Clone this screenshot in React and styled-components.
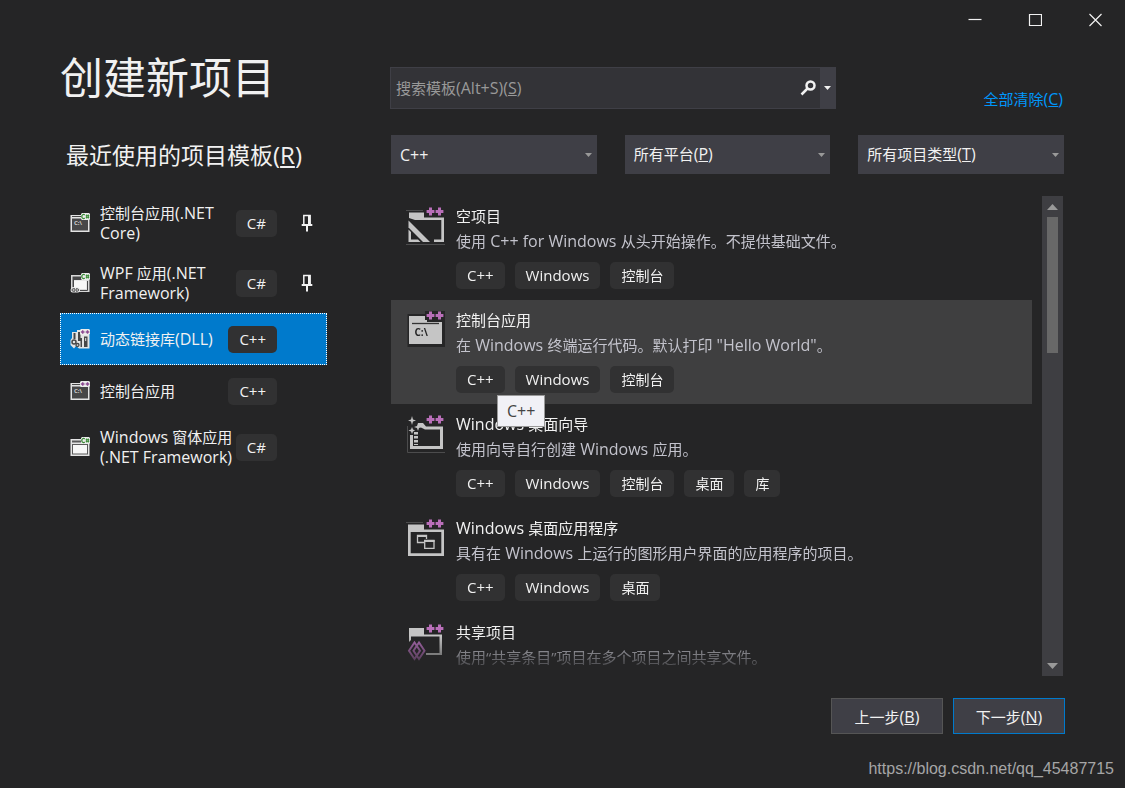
import React from 'react'
import styled, { createGlobalStyle } from 'styled-components';

const recentItems = [
  { name: '控制台应用(.NET Core)', tag: 'C#', icon: 'console', lang: 'cs', pinned: true },
  { name: 'WPF 应用(.NET Framework)', tag: 'C#', icon: 'wpf', lang: 'cs', pinned: true },
  { name: '动态链接库(DLL)', tag: 'C++', icon: 'dll', lang: 'cpp', selected: true },
  { name: '控制台应用', tag: 'C++', icon: 'console', lang: 'cpp' },
  { name: 'Windows 窗体应用(.NET Framework)', tag: 'C#', icon: 'forms', lang: 'cs' },
]

const templates = [
  {
    name: '空项目',
    desc: '使用 C++ for Windows 从头开始操作。不提供基础文件。',
    tags: ['C++', 'Windows', '控制台'],
    icon: 'empty',
  },
  {
    name: '控制台应用',
    desc: '在 Windows 终端运行代码。默认打印 "Hello World"。',
    tags: ['C++', 'Windows', '控制台'],
    icon: 'console',
    hovered: true,
    tooltip: 'C++',
  },
  {
    name: 'Windows 桌面向导',
    desc: '使用向导自行创建 Windows 应用。',
    tags: ['C++', 'Windows', '控制台', '桌面', '库'],
    icon: 'wizard',
  },
  {
    name: 'Windows 桌面应用程序',
    desc: '具有在 Windows 上运行的图形用户界面的应用程序的项目。',
    tags: ['C++', 'Windows', '桌面'],
    icon: 'desktop',
  },
  {
    name: '共享项目',
    desc: '使用“共享条目”项目在多个项目之间共享文件。',
    tags: [],
    icon: 'shared',
  },
]

// Latin runs are set one pixel larger, "&X" underlines the access key X
const Text = ({ children }) => (
  children.split(/([\x20-\x7e]+)/).filter(Boolean).map((run, i) => {
    if (!/^[\x20-\x7e]+$/.test(run)) return run
    const [before, after] = run.split('&')
    return (
      <Latin key={i}>
        {before}
        {after && <u>{after[0]}</u>}
        {after && after.slice(1)}
      </Latin>
    )
  })
)

const Plus = ({ x, y }) => (
  <path d={`M${x - 3.9} ${y}h7.8M${x} ${y - 3.9}v7.8`} stroke="#b96fb9" strokeWidth="3" fill="none" />
)

const TemplateIcon = ({ name }) => (
  <TemplateSvg viewBox="0 0 40 40" aria-hidden="true">
    {name === 'empty' && (
      <g fill="#c5c5c5">
        <path d="M0 4.500H17M0 38.500H39" stroke="#4c4c4d" strokeWidth="1" />
        <path d="M3 6.500H18V11.500H38V36H28V33.500H35.300V14H9L3 12Z" />
        <path d="M2.500 14.500L24 36H17L2.500 21.500Z" />
        <path d="M2.500 23.500L5 26V33.500H12L14.500 36H2.500Z" />
      </g>
    )}
    {name === 'console' && (
      <g>
        <path d="M1.500 4H39V37H1.500Z" fill="#262627" />
        <path d="M3 6H36V34H3Z" fill="#c5c5c5" />
        <path d="M6 13.500H33" stroke="#333" strokeWidth="1.300" />
        <path d="M19 1H39V10H36V12H21V10H19Z" fill="#262627" />
        <SvgLabel x="8.500" y="25.500">C:\</SvgLabel>
      </g>
    )}
    {name === 'wizard' && (
      <g fill="#c5c5c5">
        <path d="M1.500 12V38.500H39" stroke="#4c4c4d" fill="none" />
        <path d="M12 9H17L20 12.500H37V35H4V21H7V32H34V15.500H19L12 12Z" />
        <path d="M6 2L7 5.500L10 6.500L7 7.500L6 11L5 7.500L2 6.500L5 5.500Z" />
        <path d="M12 9L13 12L16 13L13 14L12 17L11 14L8 13L11 12Z" />
        <path d="M6 13L7 15.500L9 16.500L7 17.500L6 20L5 17.500L2.500 16.500L5 15.500Z" />
        <path d="M10 18V31" stroke="#c5c5c5" strokeWidth="4" strokeDasharray="2.500 1.500" />
      </g>
    )}
    {name === 'desktop' && (
      <g fill="none" stroke="#c5c5c5">
        <path d="M0 4.500H17" stroke="#4c4c4d" />
        <path d="M2 6.500H18V11.500H38V38H2ZM4.700 14V35.300H35.300V14Z" fill="#c5c5c5" fillRule="evenodd" stroke="none" />
        <path d="M18 24.500H11.500V17.500H20.500V21" strokeWidth="1.300" />
        <path d="M18.700 22.500H28V30.300H18.700Z" strokeWidth="1.300" />
        <path d="M11 18H21M18 23H28.600" strokeWidth="2" />
      </g>
    )}
    {name === 'shared' && (
      <g fill="none">
        <path d="M3 6H18V12.500H36V33H20V31H33.500V14.500H5V18L3 20Z" fill="#c5c5c5" />
        <path d="M8.500 20.500L3 28.700L8.500 37L14 28.700ZM13 20.500L7.500 28.700L13 37L18.500 28.700Z" stroke="#a868ae" strokeWidth="2" />
      </g>
    )}
    <Plus x={24.5} y={name === 'shared' ? 6.5 : 5.5} />
    <Plus x={33.5} y={name === 'shared' ? 6.5 : 5.5} />
  </TemplateSvg>
)

const RecentIcon = ({ name, lang }) => (
  <RecentSvg viewBox="0 0 20 20" aria-hidden="true">
    {name === 'console' && (
      <g>
        <path d="M.5 2H19.500V19H.5Z" fill="#e4e4e4" />
        <path d="M2 5.500H18V17.500H2Z" fill="#474748" />
        <path d="M2 3.500H11" stroke="#474748" />
        <SvgLabel x="4" y="12" $small>C:\</SvgLabel>
      </g>
    )}
    {name === 'wpf' && (
      <g>
        <path d="M1 2H19.500V19H1Z" fill="#d8d8d8" />
        <path d="M2.500 3.500H12V6H2.500ZM2.500 6V14H4V7H17.500V6Z" fill="#474748" />
        <path d="M4 7.500H16.500V16H4Z" fill="#f7f7f7" />
        <path d="M17.500 8V17.500H10" stroke="#474748" fill="none" />
        <path d="M2.500 14.500H8Q10 14.500 10 17T8 19.500H2.500Q.5 19.500 .5 17T2.500 14.500Z" fill="#e4e4e4" />
        <path d="M5 15.800H3Q2 15.800 2 17T3 18.200H5M6 15.800H7.500Q8.500 15.800 8.500 17T7.500 18.200H6M4 17H7" stroke="#474748" fill="none" />
      </g>
    )}
    {name === 'forms' && (
      <g>
        <path d="M.5 2H19.500V19H.5Z" fill="#e4e4e4" />
        <path d="M2 3.500H11V5.500H2Z" fill="#5a5a5b" />
        <path d="M2 7H18V17.500H2Z" fill="#5a5a5b" />
        <path d="M3 8H17V16.500H3Z" fill="#f7f7f7" />
      </g>
    )}
    {name === 'dll' && (
      <g>
        <path d="M2 3H7V1H13V6H19.500V19.500H9L6 17L4 19.500L.5 16V11L2 9Z" fill="#e4e4e4" />
        <path d="M3.500 4H5.500V10H3.500ZM8 3H10.500V12H8ZM14 7.500H17.500V18H14ZM10.500 9H12V18H10.500Z" fill="#474748" />
        <path d="M15.700 9V12" stroke="#e4e4e4" />
        <circle cx="4" cy="13" r="2" fill="none" stroke="#474748" strokeWidth="1.500" />
        <circle cx="7.500" cy="16" r="1.500" fill="none" stroke="#474748" strokeWidth="1.300" />
      </g>
    )}
    {lang === 'cs' ? (
      <g fill="none" stroke="#388a34">
        <path d="M12 0H19L20 1V6L19 7H12L11 6V1Z" fill="#ececec" stroke="none" />
        <path d="M14.700 2Q14 1.200 13 1.500Q11.800 2 11.800 3.500T13 5.500Q14 5.800 14.700 5" strokeWidth="1.300" />
        <path d="M16.700 1.500V5.500M18.300 1.500V5.500M15.700 2.700H19.300M15.700 4.300H19.300" strokeWidth="1" />
      </g>
    ) : (
      <g>
        <path d="M11 0H19L20 1V5L19 6H11L10 5V1Z" fill="#ececec" />
        <path d="M10.900 3H14.500M12.700 1.200V4.800M15.700 3H19.300M17.500 1.200V4.800" stroke="#8d4a92" strokeWidth="1.400" />
      </g>
    )}
  </RecentSvg>
)

const Pin = () => (
  <PinSvg viewBox="0 0 12 18" aria-label="已固定">
    <path d="M2.800 10V1.500H9V10" stroke="#f1f1f1" strokeWidth="1.500" fill="none" />
    <path d="M7 1H9.700V10H7Z" fill="#f1f1f1" />
    <path d="M.7 10H11.300V12H.7Z" fill="#f1f1f1" />
    <path d="M6 12V17.500" stroke="#f1f1f1" strokeWidth="2" />
  </PinSvg>
)

const Caret = ({ up }) => (
  <CaretSvg viewBox="0 0 11 6" aria-hidden="true">
    <path d={up ? 'M0 6L5.500 0L11 6Z' : 'M0 0H11L5.500 6Z'} />
  </CaretSvg>
)

const TagLabel = ({ children }) => (
  <Tag><Text>{children}</Text></Tag>
)

const Filter = ({ id, label, options, value }) => (
  <FilterBox>
    <FilterSelect id={id} defaultValue={value || ''} aria-label={value ? label : undefined}>
      {!value && <option value="" />}
      {options.map((option) => <option key={option} value={option}>{option}</option>)}
    </FilterSelect>
    {!value && <FilterLabel htmlFor={id}><Text>{label}</Text></FilterLabel>}
    <FilterArrow><Caret /></FilterArrow>
  </FilterBox>
)

const App = () => {
  return (
    <Window>
      <GlobalStyle />
      <TitleBar>
        <CaptionButton aria-label="最小化">
          <svg width="14" height="14" viewBox="0 0 14 14"><path d="M.5 6.500H13.500" /></svg>
        </CaptionButton>
        <CaptionButton aria-label="最大化">
          <svg width="14" height="14" viewBox="0 0 14 14"><path d="M1.500 1.500H13.500V12.500H1.500Z" /></svg>
        </CaptionButton>
        <CaptionButton aria-label="关闭">
          <svg width="14" height="14" viewBox="0 0 14 14"><path d="M1.500 1L13.500 13M13.500 1L1.500 13" /></svg>
        </CaptionButton>
      </TitleBar>

      <Content>
        <RecentPane>
          <Title>创建新项目</Title>
          <RecentTitle><Text>{'最近使用的项目模板(&R)'}</Text></RecentTitle>
          <List>
            {recentItems.map((item) => (
              <li key={item.name}>
                <RecentItem $selected={item.selected}>
                  <RecentIcon name={item.icon} lang={item.lang} />
                  <RecentName><Text>{item.name}</Text></RecentName>
                  <TagLabel>{item.tag}</TagLabel>
                  <PinSlot>{item.pinned && <Pin />}</PinSlot>
                </RecentItem>
              </li>
            ))}
          </List>
        </RecentPane>

        <TemplatePane>
          <SearchRow>
            <SearchBox>
              <SearchInput id="search" type="text" />
              <SearchHint htmlFor="search"><Text>{'搜索模板(Alt+S)(&S)'}</Text></SearchHint>
              <SearchButton aria-label="搜索">
                <svg width="16" height="16" viewBox="0 0 16 16">
                  <circle cx="10.500" cy="5.500" r="4" />
                  <path d="M7.500 8.500L1.500 14.500" />
                </svg>
              </SearchButton>
              <SearchMenuButton aria-label="搜索选项"><Caret /></SearchMenuButton>
            </SearchBox>
            <ClearLink href="#"><Text>{'全部清除(&C)'}</Text></ClearLink>
          </SearchRow>

          <FilterRow>
            <Filter id="language" label="语言" value="C++" options={['C++', 'C#']} />
            <Filter id="platform" label="所有平台(&P)" options={['Windows']} />
            <Filter id="type" label="所有项目类型(&T)" options={['控制台', '桌面', '库']} />
          </FilterRow>

          <TemplateArea>
            <TemplateList>
              {templates.map((item) => (
                <li key={item.name}>
                  <TemplateItem $hovered={item.hovered}>
                    <TemplateIcon name={item.icon} />
                    <TemplateBody>
                      <TemplateName><Text>{item.name}</Text></TemplateName>
                      <TemplateDesc><Text>{item.desc}</Text></TemplateDesc>
                      <TagRow>
                        {item.tags.map((tag) => <TagLabel key={tag}>{tag}</TagLabel>)}
                        {item.tooltip && <Tooltip role="tooltip"><Text>{item.tooltip}</Text></Tooltip>}
                      </TagRow>
                    </TemplateBody>
                  </TemplateItem>
                </li>
              ))}
            </TemplateList>
            <ScrollBar aria-hidden="true">
              <Caret up />
              <ScrollTrack><ScrollThumb /></ScrollTrack>
              <Caret />
            </ScrollBar>
          </TemplateArea>

          <ButtonRow>
            <DialogButton><Text>{'上一步(&B)'}</Text></DialogButton>
            <DialogButton $primary><Text>{'下一步(&N)'}</Text></DialogButton>
          </ButtonRow>
        </TemplatePane>
      </Content>
      <Footer>https://blog.csdn.net/qq_45487715</Footer>
    </Window>
  )
}

const GlobalStyle = createGlobalStyle`
  * {
    box-sizing: border-box;
  }

  body {
    margin: 0;
    background: #252526;
    color: #f1f1f1;
  }

  body, button, input, select {
    font-family: 'Open Sans', 'Noto Sans CJK SC', sans-serif;
    font-size: 15px;
  }

  button {
    margin: 0;
    padding: 0;
    border: none;
    background: none;
    color: inherit;
    text-align: left;
  }
`

const Latin = styled.span`
  font-size: calc(1em + 1px);
  line-height: 1;
`

const Window = styled.div`
  display: flex;
  flex-direction: column;
  height: 100vh;
  min-height: 600px;
`

const TitleBar = styled.header`
  display: flex;
  justify-content: flex-end;
  height: 40px;
`

const CaptionButton = styled.button`
  display: flex;
  align-items: center;
  justify-content: center;
  width: 60px;

  svg {
    fill: none;
    stroke: #f1f1f1;
    stroke-width: 1.2;
  }

  &:hover {
    background: #3f3f41;
  }
`

const Content = styled.main`
  display: grid;
  grid-template-columns: 267px minmax(0, 1fr);
  column-gap: 63px;
  flex: 1;
  min-height: 0;
  padding: 0 60px;
`

const RecentPane = styled.section`
  padding-top: 8px;
`

const Title = styled.h1`
  margin: 0;
  font-size: 43px;
  font-weight: 400;
  line-height: 60px;
`

const RecentTitle = styled.h2`
  margin: 30px 0 20px;
  padding-left: 6px;
  font-size: 23px;
  font-weight: 400;
  line-height: 35px;
  white-space: nowrap;
`

const List = styled.ul`
  margin: 0;
  padding: 0;
  list-style: none;
`

const RecentItem = styled.button`
  display: flex;
  align-items: center;
  width: 100%;
  min-height: 52px;
  padding: 9px;
  border: 1px ${({ $selected }) => ($selected ? 'dotted #fff' : 'solid transparent')};
  background: ${({ $selected }) => ($selected ? '#007acc' : 'transparent')};
`

const RecentSvg = styled.svg`
  flex: none;
  width: 20px;
  height: 20px;
`

const RecentName = styled.span`
  flex: 1;
  margin-left: 10px;
  line-height: 20px;
`

const PinSlot = styled.span`
  display: flex;
  justify-content: center;
  width: 20px;
  margin-left: 20px;
`

const PinSvg = styled.svg`
  width: 12px;
  height: 18px;
`

const Tag = styled.span`
  flex: none;
  padding: 0 11px;
  border-radius: 5px;
  background: #313132;
  font-size: 14px;
  line-height: 27px;
`

const TemplatePane = styled.section`
  display: flex;
  flex-direction: column;
  min-height: 0;
  padding-top: 27px;
`

const SearchRow = styled.div`
  display: flex;
  align-items: center;
  justify-content: space-between;
  gap: 20px;
`

const SearchBox = styled.div`
  display: grid;
  grid-template-columns: 1fr 24px 15px;
  flex: 0 1 446px;
  height: 42px;
  border: 1px solid #3f3f46;
  background: #333337;
`

const SearchInput = styled.input`
  grid-area: 1 / 1;
  min-width: 0;
  padding: 0 5px;
  border: none;
  outline: none;
  background: none;
  color: #f1f1f1;
`

const SearchHint = styled.label`
  grid-area: 1 / 1;
  padding-left: 5px;
  color: #999;
  line-height: 40px;
  pointer-events: none;

  input:focus + & {
    visibility: hidden;
  }
`

const SearchButton = styled.button`
  display: flex;
  align-items: center;
  justify-content: center;

  svg {
    fill: none;
    stroke: #f1f1f1;
    stroke-width: 2.5;
  }
`

const CaretSvg = styled.svg`
  width: 11px;
  height: 6px;
  fill: #999;
`

const SearchMenuButton = styled.button`
  display: flex;
  align-items: center;
  justify-content: center;
  background: #3f3f46;

  ${CaretSvg} {
    width: 7px;
    height: 4px;
    fill: #f1f1f1;
  }
`

const ClearLink = styled.a`
  padding: 22px 2px 0 0;
  color: #0097fb;
  line-height: 20px;
  text-decoration: none;
`

const FilterRow = styled.div`
  display: grid;
  grid-template-columns: repeat(3, 1fr);
  gap: 28px;
  margin: 26px 1px 22px;
`

const FilterBox = styled.div`
  display: grid;
  grid-template-columns: 1fr 17px;
  height: 39px;
  background: #3f3f46;
`

const FilterSelect = styled.select`
  grid-area: 1 / 1 / 2 / 3;
  min-width: 0;
  padding: 0 9px;
  border: none;
  appearance: none;
  background: none;
  color: #f1f1f1;
  font-size: 16px;
`

const FilterLabel = styled.label`
  grid-area: 1 / 1;
  padding-left: 9px;
  line-height: 39px;
  pointer-events: none;
`

const FilterArrow = styled.span`
  display: flex;
  grid-area: 1 / 2;
  align-items: center;
  justify-content: center;
  pointer-events: none;

  ${CaretSvg} {
    width: 7px;
    height: 4px;
  }
`

const TemplateArea = styled.div`
  display: flex;
  flex: 1;
  gap: 10px;
  min-height: 0;
  margin: 0 2px 0 1px;
`

const TemplateList = styled(List)`
  flex: 1;
  min-width: 0;
  overflow: hidden;
  mask-image: linear-gradient(#000 calc(100% - 40px), transparent);
`

const TemplateItem = styled.button`
  display: flex;
  align-items: flex-start;
  gap: 10px;
  width: 100%;
  min-height: 104px;
  padding: 8px 15px 11px;
  background: ${({ $hovered }) => ($hovered ? '#3f3f40' : 'transparent')};
`

const TemplateSvg = styled.svg`
  flex: none;
  width: 40px;
  height: 40px;
  margin-top: 2px;
`

const SvgLabel = styled.text`
  fill: ${({ $small }) => ($small ? '#d0d0d0' : '#262627')};
  font-family: 'Open Sans', sans-serif;
  font-size: ${({ $small }) => ($small ? 6 : 10)}px;
  font-weight: 700;
`

const TemplateBody = styled.span`
  display: flex;
  flex-direction: column;
  min-width: 0;
`

const TemplateName = styled.span`
  line-height: 25px;
`

const TemplateDesc = styled.span`
  color: #c3c3cc;
  line-height: 25px;
`

const TagRow = styled.span`
  display: flex;
  position: relative;
  gap: 10px;
  margin-top: 8px;
`

const Tooltip = styled.span`
  position: absolute;
  top: 29px;
  left: 41px;
  z-index: 1;
  padding: 0 9px;
  border: 1px solid #999;
  background: #f1f1f6;
  color: #444;
  line-height: 30px;
`

const ScrollBar = styled.div`
  display: flex;
  flex-direction: column;
  align-items: center;
  width: 21px;
  padding: 8px 0 7px;
  background: #3e3e42;
`

const ScrollTrack = styled.div`
  flex: 1;
  width: 11px;
  margin: 7px 0;
`

const ScrollThumb = styled.div`
  height: 31%;
  background: #686868;
`

const ButtonRow = styled.div`
  display: flex;
  justify-content: flex-end;
  gap: 10px;
  margin-top: 22px;
`

const DialogButton = styled.button`
  width: 112px;
  height: 36px;
  border: 1px solid ${({ $primary }) => ($primary ? '#007acc' : '#555')};
  background: #3f3f46;
  text-align: center;
`

const Footer = styled.footer`
  padding: 25px 11px 9px;
  color: #a6a6a6;
  font-family: 'Liberation Sans', Arial, sans-serif;
  font-size: 16px;
  line-height: 20px;
  text-align: right;
`

export default App;
